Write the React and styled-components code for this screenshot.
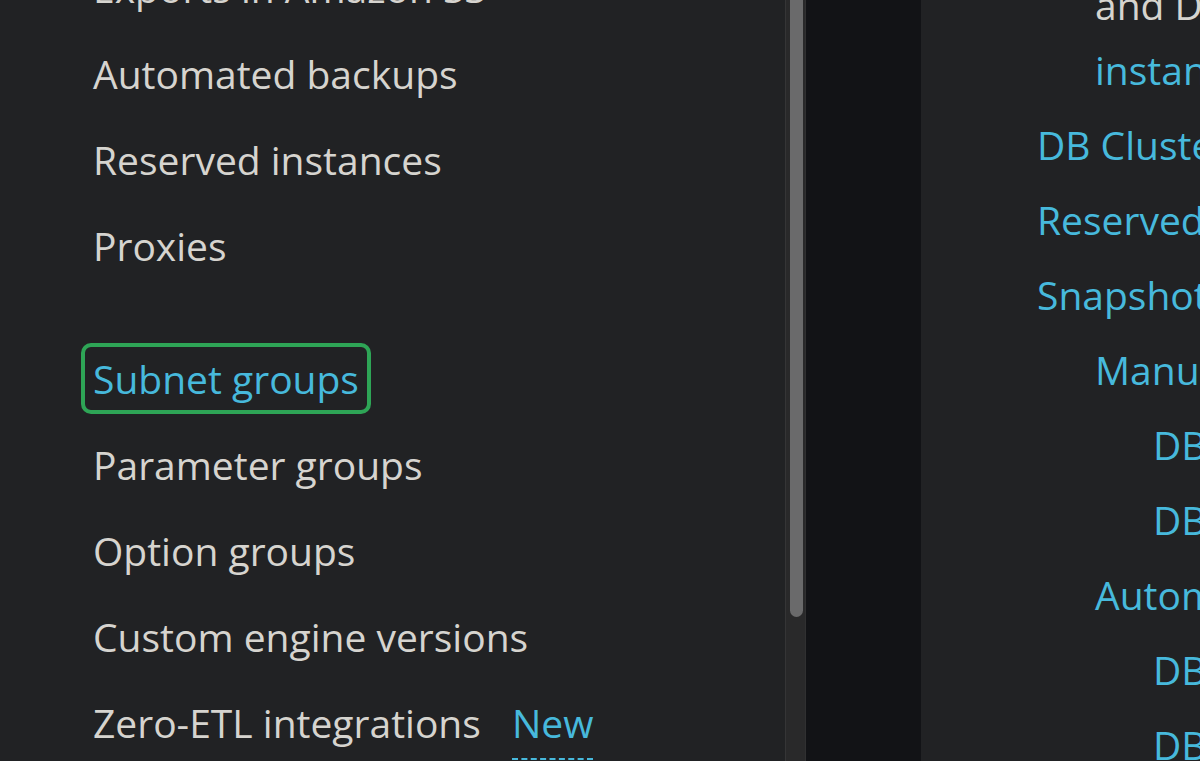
import styled, { createGlobalStyle } from "styled-components";

const GlobalStyle = createGlobalStyle`
  html, body {
    margin: 0;
    padding: 0;
    background: #121316;
  }
  * {
    box-sizing: border-box;
  }
`;

const App = () => {
  return (
    <Page>
      <GlobalStyle />

      {/* SIDE NAVIGATION */}

      <Sidebar>
        <NavList>
          <NavItem>Exports in Amazon S3</NavItem>
          <NavItem>Automated backups</NavItem>
          <NavItem>Reserved instances</NavItem>
          <NavItem>Proxies</NavItem>
          <Divider />
          <NavItem active>Subnet groups</NavItem>
          <NavItem>Parameter groups</NavItem>
          <NavItem>Option groups</NavItem>
          <NavItem>Custom engine versions</NavItem>
          <NavItem>
            Zero-ETL integrations<Badge>New</Badge>
          </NavItem>
        </NavList>
      </Sidebar>

      <ScrollTrack>
        <ScrollThumb />
      </ScrollTrack>

      <Gutter />

      {/* RESOURCES */}

      <Content>
        <ResourceList>
          <Resource level={1}>
            <Muted>and DB</Muted>
            <br />
            instances (2/40)
          </Resource>
          <Resource level={0}>DB Clusters (1/40)</Resource>
          <Resource level={0}>Reserved instances (0/40)</Resource>
          <Resource level={0}>Snapshots (4)</Resource>
          <Resource level={1}>Manual</Resource>
          <Resource level={2}>DB Instance (0/100)</Resource>
          <Resource level={2}>DB Cluster (0/100)</Resource>
          <Resource level={1}>Automated</Resource>
          <Resource level={2}>DB Instance (2)</Resource>
          <Resource level={2}>DB Cluster (2)</Resource>
        </ResourceList>
      </Content>
    </Page>
  );
};

const Page = styled.div`
  display: flex;
  flex-direction: row;
  width: 100vw;
  height: 100vh;
  overflow: hidden;
  font-family: "Open Sans", "Noto Sans", sans-serif;
  font-weight: 500;
`;

const Sidebar = styled.nav`
  width: 785px;
  flex-shrink: 0;
  height: 100%;
  overflow: hidden;
  background: #212224;
  padding-left: 81px;
`;

const NavList = styled.div`
  display: flex;
  flex-direction: column;
  align-items: flex-start;
  gap: 15px;
  margin-top: -48px;
`;

const NavItem = styled.a`
  display: block;
  white-space: nowrap;
  font-size: 39px;
  line-height: 63px;
  padding: 0 8px;
  border: 4px solid ${(p) => (p.active ? "#2ea556" : "transparent")};
  border-radius: 10px;
  color: ${(p) => (p.active ? "#47b9dc" : "#d6d4cf")};
  cursor: pointer;
`;

const Badge = styled.span`
  margin-left: 31px;
  color: #47b9dc;
  border-bottom: 2px dashed #47b9dc;
  padding-bottom: 9px;
`;

const Divider = styled.div`
  height: 32px;
  flex-shrink: 0;
`;

const ScrollTrack = styled.div`
  width: 21px;
  flex-shrink: 0;
  height: 100%;
  background: #29292a;
  border-left: 1px solid #353536;
  border-right: 1px solid #303031;
  padding: 0 2px 0 4px;
`;

const ScrollThumb = styled.div`
  width: 13px;
  height: 617px;
  background: #6a6a6b;
  border-radius: 0 0 7px 7px;
`;

const Gutter = styled.div`
  width: 115px;
  flex-shrink: 0;
  height: 100%;
  background: #121316;
`;

const Content = styled.main`
  flex: 1;
  height: 100%;
  overflow: hidden;
  background: #212224;
  padding-left: 116px;
`;

const ResourceList = styled.div`
  display: flex;
  flex-direction: column;
  gap: 10px;
  margin-top: -28px;
`;

const Resource = styled.a`
  display: block;
  white-space: nowrap;
  font-size: 39px;
  line-height: 65px;
  padding-left: ${(p) => p.level * 58}px;
  color: #47b9dc;
  cursor: pointer;
`;

const Muted = styled.span`
  color: #d6d4cf;
`;

export default App;
